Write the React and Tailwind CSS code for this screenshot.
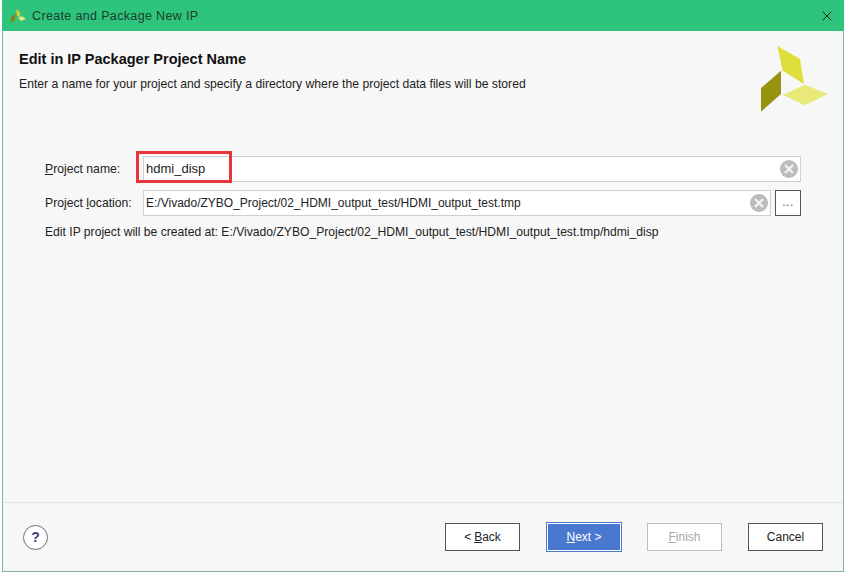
import { X } from 'lucide-react';

function ClearIcon() {
  return (
    <svg width="18" height="18" viewBox="0 0 18 18" className="shrink-0">
      <circle cx="9" cy="9" r="9" fill="#bcbcbc" />
      <path d="M5 5 L13 13 M13 5 L5 13" stroke="#f4f4f4" strokeWidth="2.4" />
    </svg>
  );
}

function Field({ value, className = '' }) {
  return (
    <div className={`h-[26px] bg-white border border-[#cfcfcf] flex items-center pl-[2px] pr-[2px] ${className}`}>
      <span className="flex-1">{value}</span>
      <ClearIcon />
    </div>
  );
}

function Button({ children, className = '' }) {
  return (
    <div className={`w-[75px] h-[28px] flex items-center justify-center bg-white border border-[#555] text-[12px] text-[#222] ${className}`}>
      {children}
    </div>
  );
}

export default function App() {
  return (
    <div className="w-[846px] h-[579px] bg-white pl-[2px] pr-[2px] pb-[7px] font-['Liberation_Sans',Arial,sans-serif] text-[12px] text-[#222]">
      <div className="h-full flex flex-col bg-[#f8f7f7] border-x border-b border-[#7fb5a5]">
        {/* title bar */}
        <div className="h-[31px] shrink-0 bg-[#2ec47e] flex items-center pl-[8px] pr-[9px] -mx-px">
          <svg width="17" height="16" viewBox="0 0 17 16" className="shrink-0">
            <path d="M6 1 L10 4 L10 9 L7 8 Z" fill="#d9c93a" />
            <path d="M8 10 L12 8 L16 11 L11 13 Z" fill="#e8e477" />
            <path d="M1 9 L5 6 L5 12 L1 15 Z" fill="#8a7d12" />
          </svg>
          <span className="ml-[5px] pt-[1px] text-[12.5px] tracking-[0.35px] text-[#1a3f2d]">Create and Package New IP</span>
          <X size={16} strokeWidth={1.3} className="ml-auto text-[#111]" />
        </div>

        {/* header */}
        <div className="h-[89px] shrink-0 flex pl-[16px] pr-[13px]">
          <div className="flex-1 pt-[19px]">
            <h1 className="text-[14.5px] leading-[18px] font-bold text-[#111]">Edit in IP Packager Project Name</h1>
            <p className="mt-[9px] leading-[14px] text-[12.2px]">Enter a name for your project and specify a directory where the project data files will be stored</p>
          </div>
          <svg width="70" height="70" viewBox="0 0 70 70" className="mt-[13px] shrink-0">
            <path d="M17.3 2 L40 15 L44 40 L22.7 26.7 Z" fill="#dfdf3c" />
            <path d="M21 26.7 L21 50 L1 67.7 L1 44 Z" fill="#98930f" />
            <path d="M45 40.7 L67.7 50 L45 61.3 L22.7 51 Z" fill="#e8e977" />
          </svg>
        </div>

        {/* form */}
        <div className="flex-1 pl-[42px] pr-[42px] pt-[36px]">
          <div className="flex items-center">
            <span className="w-[98px] text-[12.2px]"><u>P</u>roject name:</span>
            <div className="relative flex-1">
              <Field value={<span className="text-[13px]">hdmi_disp</span>} className="w-full" />
              <div className="absolute left-[-7px] top-[-5px] w-[96px] h-[32px] border-[3px] border-[#e8343e]" />
            </div>
          </div>
          <div className="flex items-center mt-[8px]">
            <span className="w-[98px] text-[12.2px]">Project <u>l</u>ocation:</span>
            <Field value="E:/Vivado/ZYBO_Project/02_HDMI_output_test/HDMI_output_test.tmp" className="flex-1" />
            <div className="ml-[4px] w-[26px] h-[26px] bg-white border border-[#555] flex items-center justify-center text-[12px] text-[#555] tracking-[0.5px] leading-none pb-[3px]">...</div>
          </div>
          <p className="mt-[9px] leading-[14px] text-[12.14px]">Edit IP project will be created at: E:/Vivado/ZYBO_Project/02_HDMI_output_test/HDMI_output_test.tmp/hdmi_disp</p>
        </div>

        {/* footer */}
        <div className="h-[69px] shrink-0 border-t border-[#e4e4e4] flex items-center pl-[20px] pr-[20px]">
          <div className="w-[25px] h-[25px] rounded-full border border-[#6e6e6e] bg-white flex items-center justify-center text-[14px] font-bold text-[#3b3f7a]">?</div>
          <div className="ml-auto flex items-center">
            <Button>&lt; <u className="ml-[3px]">B</u>ack</Button>
            <div className="ml-[26px] w-[76px] h-[30px] bg-[#4a78cf] p-[1px]">
              <div className="w-full h-full border border-white flex items-center justify-center text-white"><u>N</u>ext &gt;</div>
            </div>
            <Button className="ml-[25px] !border-[#bdbdbd] !text-[#a8a8a8]"><u>F</u>inish</Button>
            <Button className="ml-[26px]">Cancel</Button>
          </div>
        </div>
      </div>
    </div>
  );
}
